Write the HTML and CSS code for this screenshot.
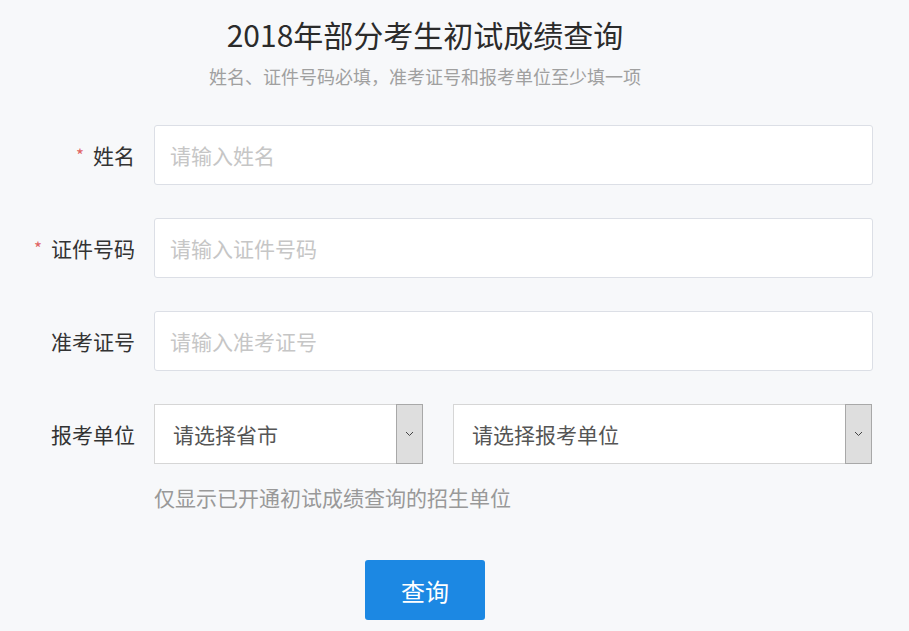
FILE: index.html
```html
<!DOCTYPE html>
<html>
<head>
  <meta charset="utf-8">
  <link rel="stylesheet" href="styles.css">
</head>
<body>
  <div class="container">
    <div class="header">
      <div class="title">2018年部分考生初试成绩查询</div>
      <div class="subtitle">姓名、证件号码必填，准考证号和报考单位至少填一项</div>
    </div>

    <div class="form">
      <div class="form-row">
        <label class="form-label"><span class="required">*</span>姓名</label>
        <input class="text-input" type="text" placeholder="请输入姓名">
      </div>
      <div class="form-row">
        <label class="form-label"><span class="required">*</span>证件号码</label>
        <input class="text-input" type="text" placeholder="请输入证件号码">
      </div>
      <div class="form-row">
        <label class="form-label">准考证号</label>
        <input class="text-input" type="text" placeholder="请输入准考证号">
      </div>
      <div class="form-row form-row-last">
        <label class="form-label">报考单位</label>
        <div class="select select-province">
          <span class="select-text">请选择省市</span>
          <span class="select-arrow">
            <svg width="9" height="6" viewBox="0 0 9 6"><path d="M1 1l3.5 3.5L8 1" fill="none" stroke="#444" stroke-width="1"/></svg>
          </span>
        </div>
        <div class="select select-unit">
          <span class="select-text">请选择报考单位</span>
          <span class="select-arrow">
            <svg width="9" height="6" viewBox="0 0 9 6"><path d="M1 1l3.5 3.5L8 1" fill="none" stroke="#444" stroke-width="1"/></svg>
          </span>
        </div>
      </div>
      <div class="hint">仅显示已开通初试成绩查询的招生单位</div>
    </div>

    <div class="actions">
      <button class="btn-query">查询</button>
    </div>
  </div>
</body>
</html>
```

FILE: styles.css
```css
body {
  margin: 0;
  background: #f7f8fa;
  font-family: "Microsoft YaHei", "Noto Sans CJK SC", sans-serif;
  color: #333;
}
.container {
  width: 850px;
}
.header {
  text-align: center;
  padding-top: 14px;
}
.title {
  font-size: 30px;
  line-height: 40px;
  color: #2b2b2b;
}
.subtitle {
  margin-top: 10px;
  font-size: 18px;
  line-height: 24px;
  color: #a0a0a0;
}
.form {
  margin-top: 37px;
}
.form-row {
  display: flex;
  align-items: center;
  height: 60px;
  margin-bottom: 33px;
}
.form-row-last {
  margin-bottom: 0;
}
.form-label {
  width: 135px;
  flex: none;
  padding-right: 19px;
  text-align: right;
  font-size: 21px;
  color: #333;
}
.required {
  color: #e06464;
  font-size: 17px;
  margin-right: 9px;
  position: relative;
  top: -2px;
}
.text-input {
  box-sizing: border-box;
  flex: none;
  width: 719px;
  height: 60px;
  padding: 0 15px;
  border: 1px solid #dcdfe6;
  border-radius: 3px;
  background: #fff;
  font-family: inherit;
  font-size: 21px;
  color: #333;
  outline: none;
}
.text-input::placeholder {
  color: #c6c6c6;
}
.select {
  box-sizing: border-box;
  flex: none;
  display: flex;
  align-items: center;
  justify-content: space-between;
  height: 60px;
  border: 1px solid #d6d6d6;
  background: #fff;
}
.select-province {
  width: 269px;
}
.select-unit {
  width: 419px;
  margin-left: 30px;
}
.select-text {
  padding-left: 18px;
  font-size: 21px;
  color: #555;
}
.select-arrow {
  box-sizing: border-box;
  display: flex;
  align-items: center;
  justify-content: center;
  width: 27px;
  height: 60px;
  margin: -1px -1px -1px 0;
  border: 1px solid #a8a8a8;
  background: #dedede;
}
.hint {
  margin: 18px 0 0 154px;
  font-size: 21px;
  line-height: 30px;
  color: #999;
}
.actions {
  margin-top: 48px;
  text-align: center;
}
.btn-query {
  width: 120px;
  height: 60px;
  border: none;
  border-radius: 3px;
  background: #1c88e3;
  color: #fff;
  font-family: inherit;
  font-size: 24px;
  cursor: pointer;
}
```
